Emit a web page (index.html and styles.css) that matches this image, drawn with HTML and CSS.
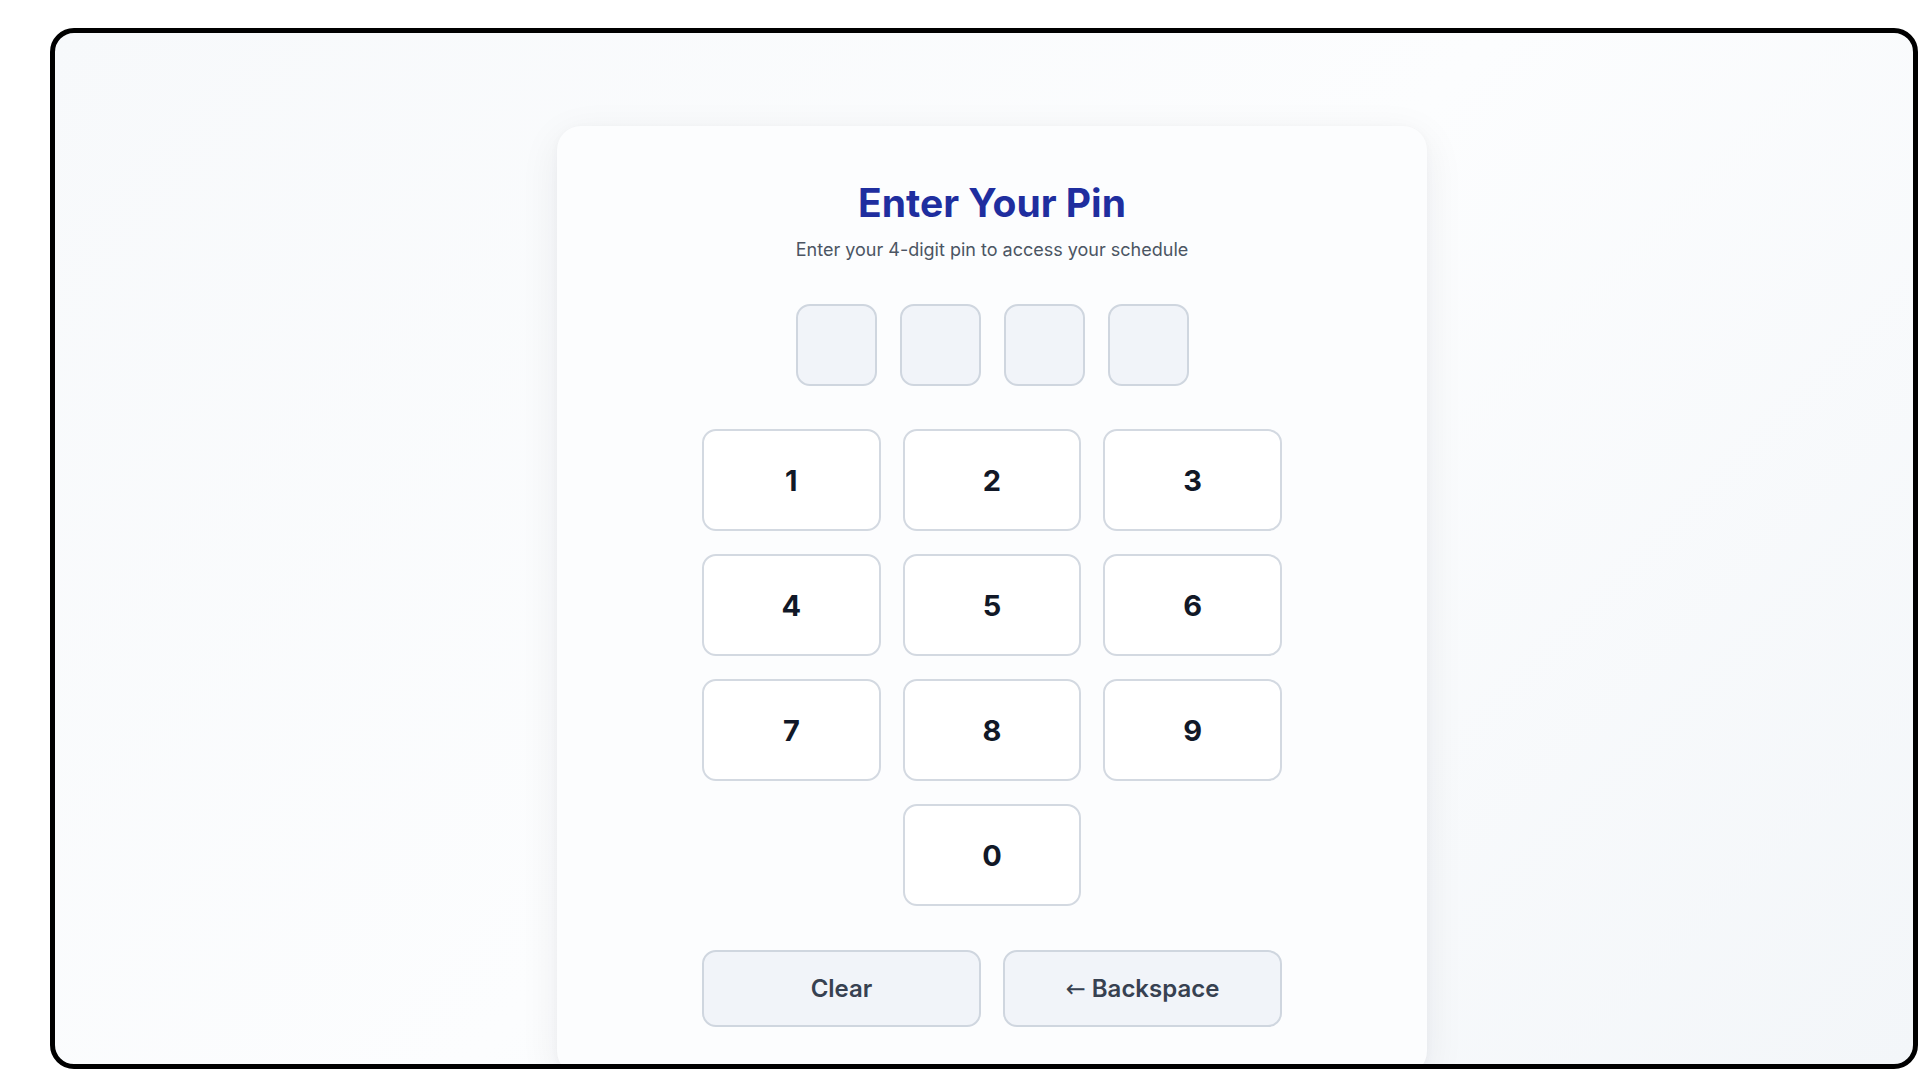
FILE: index.html
```html
<!DOCTYPE html>
<html lang="en">
<head>
<meta charset="utf-8">
<title>Enter Your Pin</title>
<link rel="stylesheet" href="styles.css">
</head>
<body>
<div class="frame">
  <div class="stage">
    <div class="card">
      <h1 class="title">Enter Your Pin</h1>
      <p class="subtitle">Enter your 4-digit pin to access your schedule</p>
      <div class="pins">
        <div class="pin"></div>
        <div class="pin"></div>
        <div class="pin"></div>
        <div class="pin"></div>
      </div>
      <div class="keypad">
        <button class="key">1</button>
        <button class="key">2</button>
        <button class="key">3</button>
        <button class="key">4</button>
        <button class="key">5</button>
        <button class="key">6</button>
        <button class="key">7</button>
        <button class="key">8</button>
        <button class="key">9</button>
        <button class="key key-zero">0</button>
      </div>
      <div class="actions">
        <button class="action">Clear</button>
        <button class="action"><span class="arrow">←</span> Backspace</button>
      </div>
    </div>
  </div>
</div>
</body>
</html>
```

FILE: styles.css
```css
* { box-sizing: border-box; }
html, body { margin: 0; padding: 0; background: #ffffff; }
body {
  font-family: Inter, "Noto Sans", "Liberation Sans", sans-serif;
  width: 1920px;
  height: 1080px;
  overflow: hidden;
}
.frame {
  margin: 28px 2px 0 50px;
  height: 1041px;
  border: 5px solid #000;
  border-radius: 24px;
  overflow: hidden;
  background: linear-gradient(135deg, #f7f9fb 0%, #fcfdfe 50%, #f3f6f9 100%);
}
.stage {
  height: 100%;
  padding: 93px 0 0 16px;
}
.card {
  width: 870px;
  margin: 0 auto;
  background: #fcfdfe;
  border-radius: 24px;
  box-shadow: 0 10px 40px rgba(15, 23, 42, 0.07), 0 2px 8px rgba(15, 23, 42, 0.03);
  padding: 56px 0 48px;
  display: flex;
  flex-direction: column;
  align-items: center;
}
.title {
  margin: 0;
  font-size: 39px;
  line-height: 42px;
  font-weight: 700;
  color: #1f2e9f;
  letter-spacing: 0;
}
.subtitle {
  margin: 13px 0 0;
  font-size: 18px;
  line-height: 26px;
  color: #4b5563;
}
.pins {
  margin-top: 41px;
  display: flex;
  gap: 23px;
}
.pin {
  width: 81px;
  height: 82px;
  border: 2px solid #cfd6df;
  border-radius: 14px;
  background: #f1f4f9;
}
.keypad {
  margin-top: 43px;
  width: 580px;
  display: grid;
  grid-template-columns: repeat(3, 1fr);
  column-gap: 22px;
  row-gap: 23px;
}
.key {
  height: 102px;
  border: 2px solid #d3d9e1;
  border-radius: 14px;
  background: #ffffff;
  font-family: inherit;
  font-size: 29px;
  font-weight: 700;
  color: #111827;
  padding: 0;
}
.key-zero { grid-column: 2; }
.actions {
  margin-top: 44px;
  width: 580px;
  display: grid;
  grid-template-columns: 1fr 1fr;
  gap: 22px;
}
.action {
  height: 77px;
  border: 2px solid #cfd6df;
  border-radius: 14px;
  background: #f1f4f9;
  font-family: inherit;
  font-size: 24px;
  font-weight: 600;
  color: #374151;
  padding: 0;
}
.arrow {
  font-family: "DejaVu Sans", "Liberation Sans", sans-serif;
  font-weight: 400;
}
```
